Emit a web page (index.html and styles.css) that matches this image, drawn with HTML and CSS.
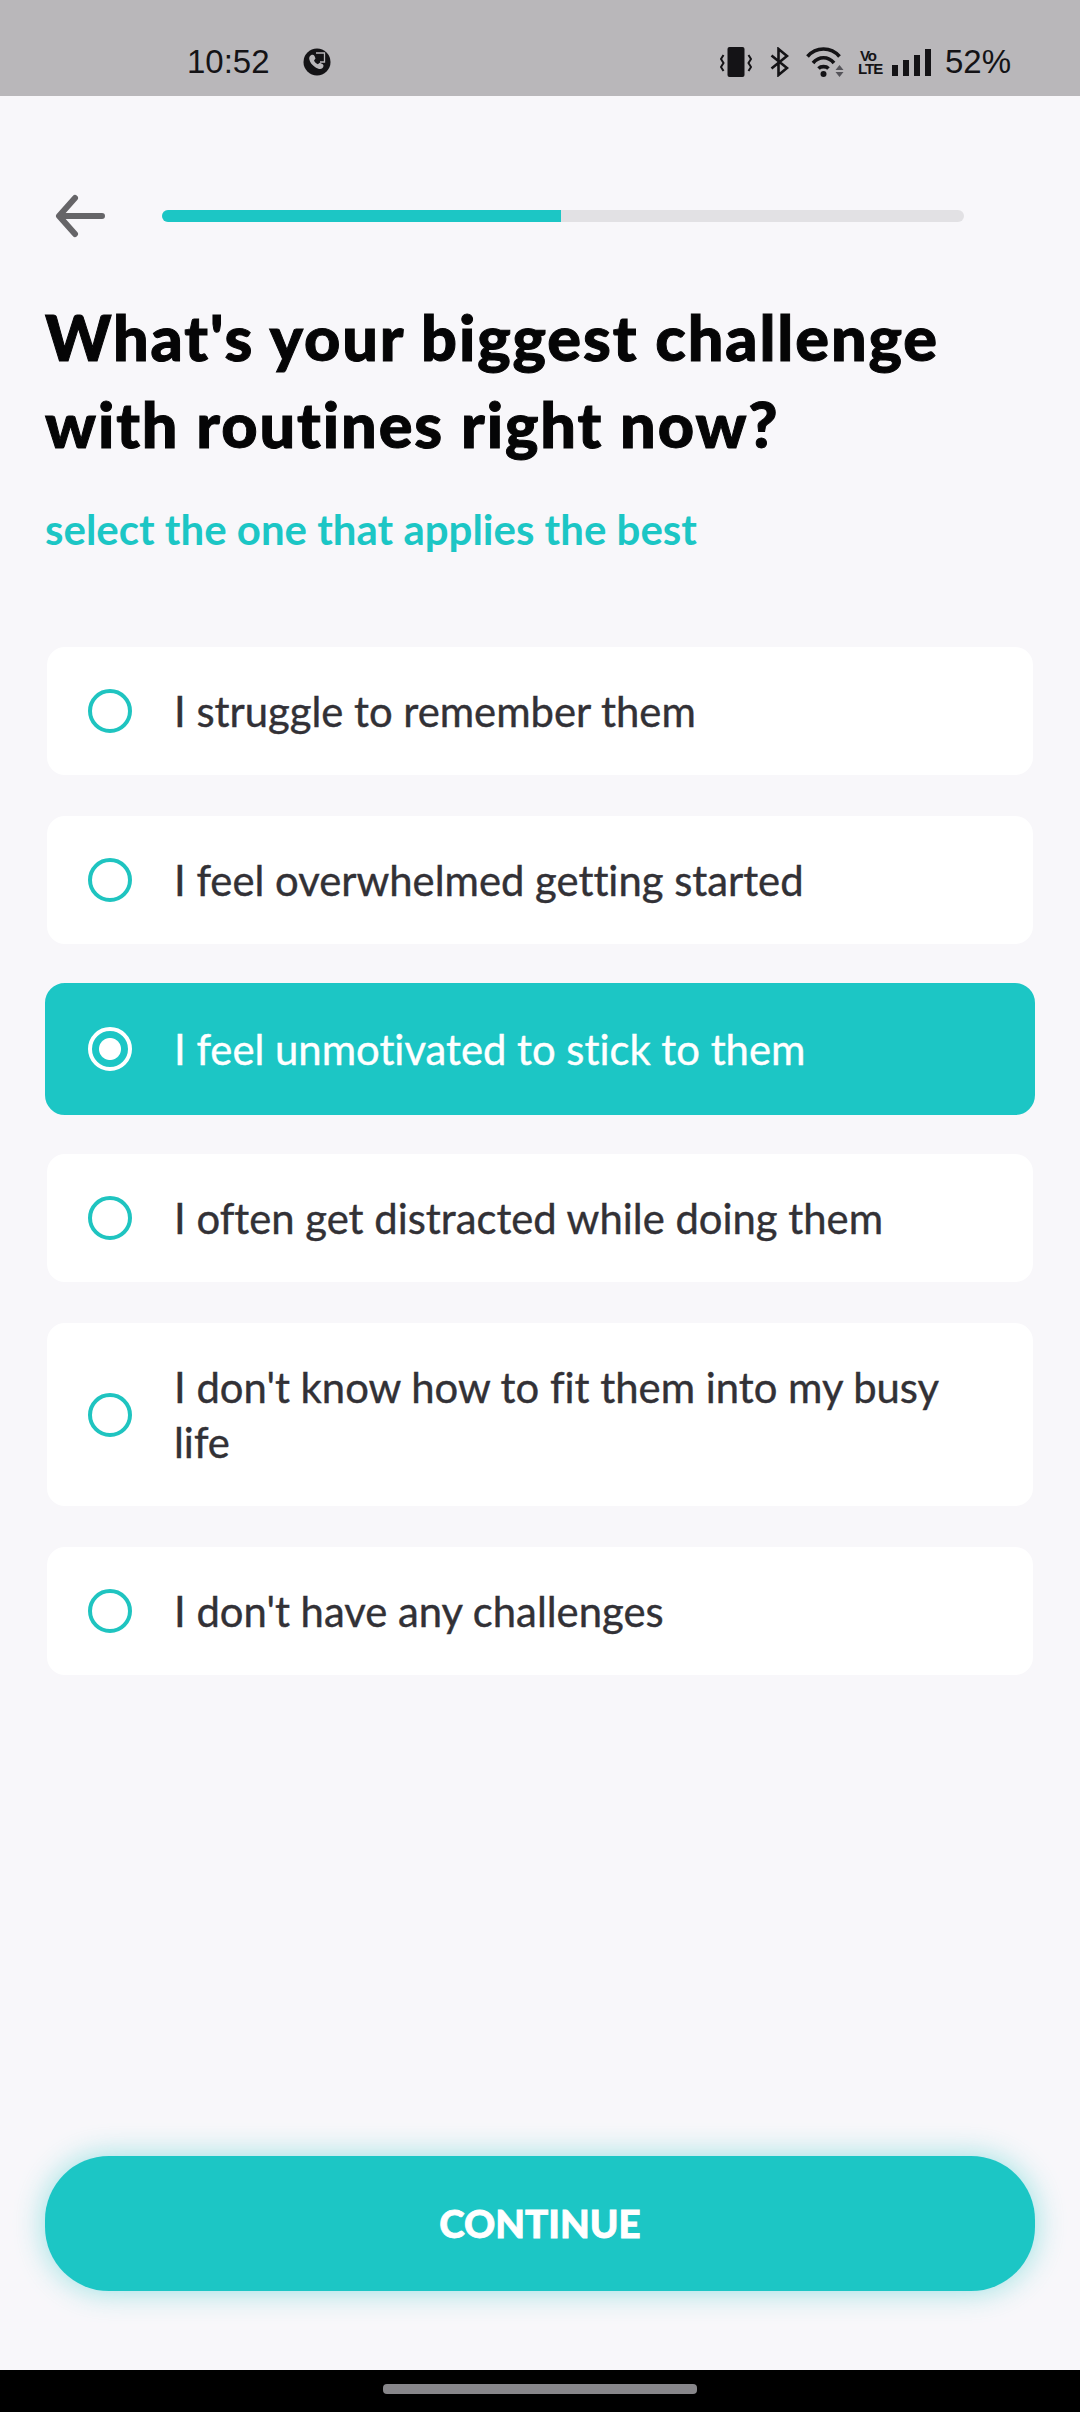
FILE: index.html
```html
<!DOCTYPE html>
<html lang="en">
<head>
    <meta charset="UTF-8">
    <meta name="viewport" content="width=device-width, initial-scale=1.0">
    <title>Routines</title>
    <link rel="stylesheet" href="styles.css">
</head>
<body>
    <div class="statusbar">
        <div class="status-left">
            <span class="clock">10:52</span>
            <svg class="ic-call" width="28" height="28" viewBox="0 0 28 28">
                <circle cx="14" cy="14" r="13.5" fill="#141316"/>
                <path d="M7 8c2-2 3.500-1.500 4.500 0l1 2.500-1.500 2c.8 1.800 2 3 3.800 3.800l2-1.500 3 1.500c1 1 1 2.500-.5 4-1.500 1.200-4 1-7-1-3-2-5.500-5-6-8-.2-1.500 0-2.500.7-3.300z" fill="#b9b7ba"/>
                <path d="M13 5h8.500v9H17" fill="none" stroke="#b9b7ba" stroke-width="1.300"/>
            </svg>
        </div>
        <div class="status-right">
            <svg width="32" height="30" viewBox="0 0 32 30">
                <rect x="7.500" y="0" width="17" height="30" rx="2" fill="#141316"/>
                <path d="M3.500 8 1 12l2.500 4L1 20l2.500 4M28.500 8l2.500 4-2.500 4 2.500 4-2.500 4" fill="none" stroke="#141316" stroke-width="2"/>
            </svg>
            <svg class="ic-bt" width="19" height="30" viewBox="0 0 19 30">
                <path d="M1.500 8.500 17 21 8.500 28V2L17 9 1.500 21.500" fill="none" stroke="#141316" stroke-width="2.600"/>
            </svg>
            <svg class="ic-wifi" width="38" height="30" viewBox="0 0 38 30">
                <path d="M1.500 9.500C10-.5 25-.5 33.500 9.500M7 16c6-7 15-7 21 0M12.500 21.500c2.500-2.500 7.500-2.500 10 0" fill="none" stroke="#141316" stroke-width="3.600"/>
                <circle cx="17.500" cy="27" r="3" fill="#141316"/>
                <path d="M29.500 23h8l-4-5zM29.500 25h8l-4 5z" fill="#55545a"/>
            </svg>
            <span class="volte">Vo<br>LTE</span>
            <span class="signal">
                <i class="bar-1"></i><i class="bar-2"></i><i class="bar-3"></i><i class="bar-4"></i>
            </span>
            <span class="battery">52%</span>
        </div>
    </div>

    <div class="page">
        <div class="topbar">
            <svg class="back" width="50" height="44" viewBox="0 0 50 44">
                <path d="M20 4 4 22l16 18M5 22h42" fill="none" stroke="#666568" stroke-width="6" stroke-linecap="round" stroke-linejoin="round"/>
            </svg>
            <div class="progress"><div class="progress-fill"></div></div>
        </div>

        <h1>What's your biggest challenge with routines right now?</h1>
        <p class="hint">select the one that applies the best</p>

        <div class="options">
            <div class="option"><span class="radio"></span><span>I struggle to remember them</span></div>
            <div class="option"><span class="radio"></span><span>I feel overwhelmed getting started</span></div>
            <div class="option selected"><span class="radio"></span><span>I feel unmotivated to stick to them</span></div>
            <div class="option"><span class="radio"></span><span>I often get distracted while doing them</span></div>
            <div class="option"><span class="radio"></span><span>I don't know how to fit them into my busy life</span></div>
            <div class="option"><span class="radio"></span><span>I don't have any challenges</span></div>
        </div>

        <button class="continue">CONTINUE</button>
    </div>

    <div class="navbar"><div class="home-bar"></div></div>
</body>
</html>
```

FILE: styles.css
```css
* {
    box-sizing: border-box;
}

body {
    margin: 0;
    height: 2412px;
    display: flex;
    flex-direction: column;
    background-color: #f8f7fa;
    font-family: Lato, "Noto Sans", sans-serif;
    font-variant-ligatures: none;
    overflow: hidden;
}

.statusbar {
    height: 96px;
    flex: none;
    display: flex;
    align-items: center;
    justify-content: space-between;
    padding: 28px 69px 0 187px;
    background-color: #b9b7ba;
    color: #141316;
    font-family: "Liberation Sans", sans-serif;
    font-size: 33px;
}

.status-left, .status-right {
    display: flex;
    align-items: center;
}

.status-left {
    gap: 33px;
}

.status-right {
    gap: 14px;
}

.ic-bt {
    margin-left: 4px;
}

.ic-wifi {
    margin-left: 3px;
}

.volte {
    width: 20px;
    font-family: "Liberation Sans Narrow", "Liberation Sans", sans-serif;
    font-size: 15px;
    line-height: 13px;
    font-weight: bold;
    letter-spacing: -1px;
    text-align: center;
}

.signal {
    display: flex;
    align-items: flex-end;
    gap: 5px;
    height: 27px;
}

.signal i {
    width: 6px;
    background-color: #141316;
}

.bar-1 { height: 11px; }
.bar-2 { height: 16px; }
.bar-3 { height: 21px; }
.bar-4 { height: 27px; }

.page {
    flex: 1;
    display: flex;
    flex-direction: column;
    padding: 98px 45px 79px;
}

.topbar {
    display: flex;
    align-items: center;
    height: 44px;
    padding-left: 10px;
    gap: 57px;
}

.progress {
    width: 802px;
    height: 12px;
    border-radius: 6px;
    background-color: #e2e1e4;
}

.progress-fill {
    width: 49.8%;
    height: 100%;
    border-radius: 6px 0 0 6px;
    background-color: #1cc6c5;
}

h1 {
    margin: 55px 0 0;
    font-size: 63px;
    line-height: 87px;
    font-weight: 900;
    letter-spacing: 1.900px;
    -webkit-text-stroke: 1px #050506;
    color: #050506;
}

.hint {
    margin: 38px 0 0;
    font-size: 42px;
    line-height: 48px;
    font-weight: 700;
    color: #1cc6c5;
}

.options {
    margin-top: 92px;
    display: flex;
    flex-direction: column;
    gap: 37px;
}

.option {
    display: flex;
    align-items: center;
    gap: 42px;
    min-height: 132px;
    padding: 36.500px 70px 36.500px 41px;
    border: 2px solid #f8f7fa;
    border-radius: 20px;
    background-color: #fff;
    color: #323136;
    font-size: 41.800px;
    line-height: 55px;
    font-weight: 400;
    -webkit-text-stroke: 0.400px;
}

.radio {
    flex: none;
    width: 44px;
    height: 44px;
    border: 4.500px solid #1fc4c0;
    border-radius: 50%;
}

.selected {
    border-color: #1cc6c5;
    background-color: #1cc6c5;
    color: #fff;
}

.selected .radio {
    border-color: #fff;
    background: radial-gradient(circle, #fff 0 10.500px, transparent 11.500px);
}

.continue {
    margin-top: auto;
    height: 135px;
    border: none;
    border-radius: 64px;
    background-color: #1cc6c5;
    box-shadow: 0 0 30px rgba(28, 198, 197, 0.45);
    color: white;
    font-family: inherit;
    font-size: 38.500px;
    font-weight: 900;
    -webkit-text-stroke: 0.800px white;
    padding-bottom: 2px;
}

.navbar {
    height: 42px;
    flex: none;
    display: flex;
    justify-content: center;
    padding-top: 14px;
    background-color: #000;
}

.home-bar {
    width: 314px;
    height: 10px;
    border-radius: 4px;
    background-color: #87868a;
}
```
